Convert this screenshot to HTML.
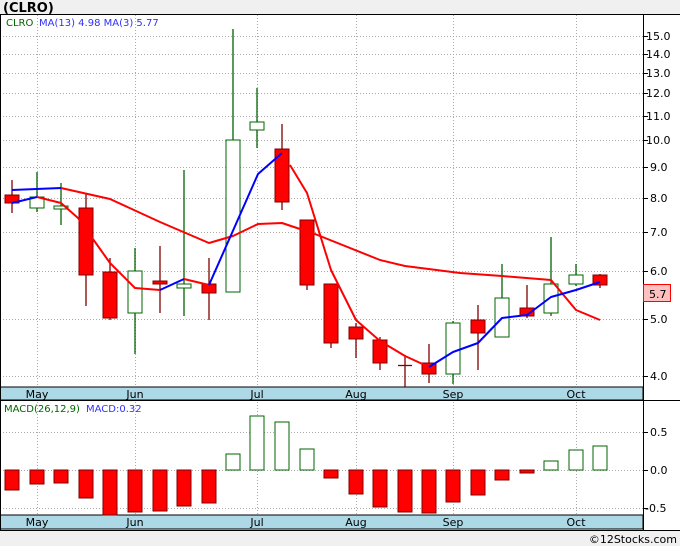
<!DOCTYPE html>
<html><head><meta charset="utf-8"><style>
body{margin:0;background:#fff;}
svg{display:block;font-family:"DejaVu Sans","Liberation Sans",sans-serif;}
</style></head><body>
<svg width="680" height="546" viewBox="0 0 680 546" xmlns="http://www.w3.org/2000/svg">
<rect x="0" y="0" width="680" height="14" fill="#f0f0f0"/>
<text x="3" y="12" font-size="13" font-weight="bold" fill="#000">(CLRO)</text>
<line x1="0" y1="14.5" x2="680" y2="14.5" stroke="#000"/>
<g stroke="#aaa" stroke-dasharray="1,2" stroke-width="1">
<line x1="0" x2="643" y1="376.5" y2="376.5"/><line x1="0" x2="643" y1="319.5" y2="319.5"/><line x1="0" x2="643" y1="271.5" y2="271.5"/><line x1="0" x2="643" y1="232.5" y2="232.5"/><line x1="0" x2="643" y1="198.5" y2="198.5"/><line x1="0" x2="643" y1="167.5" y2="167.5"/><line x1="0" x2="643" y1="140.5" y2="140.5"/><line x1="0" x2="643" y1="116.5" y2="116.5"/><line x1="0" x2="643" y1="93.5" y2="93.5"/><line x1="0" x2="643" y1="73.5" y2="73.5"/><line x1="0" x2="643" y1="54.5" y2="54.5"/><line x1="0" x2="643" y1="36.5" y2="36.5"/>
<line x1="0" x2="643" y1="432.5" y2="432.5"/><line x1="0" x2="643" y1="470.5" y2="470.5"/><line x1="0" x2="643" y1="508.5" y2="508.5"/>
<line x1="37.5" x2="37.5" y1="15" y2="530"/><line x1="135.5" x2="135.5" y1="15" y2="530"/><line x1="257.5" x2="257.5" y1="15" y2="530"/><line x1="356.5" x2="356.5" y1="15" y2="530"/><line x1="453.5" x2="453.5" y1="15" y2="530"/><line x1="576.5" x2="576.5" y1="15" y2="530"/>
</g>
<text x="6" y="26" font-size="10" fill="#006400">CLRO</text>
<text x="39" y="26" font-size="10" fill="#3030ff">MA(13)  4.98  MA(3)  5.77</text>
<g stroke-width="1.3">
<g stroke="#800000">
<line x1="12" x2="12" y1="180" y2="213"/><line x1="86" x2="86" y1="193" y2="306"/><line x1="110" x2="110" y1="258" y2="320"/><line x1="160" x2="160" y1="246" y2="313"/><line x1="209" x2="209" y1="258" y2="320"/><line x1="282" x2="282" y1="124" y2="210"/><line x1="307" x2="307" y1="220" y2="290"/><line x1="331" x2="331" y1="284" y2="348"/><line x1="356" x2="356" y1="323" y2="358"/><line x1="380" x2="380" y1="337" y2="370"/><line x1="405" x2="405" y1="355" y2="388"/><line x1="398" x2="412" y1="365.5" y2="365.5"/><line x1="429" x2="429" y1="344" y2="383"/><line x1="478" x2="478" y1="305" y2="370"/><line x1="527" x2="527" y1="285" y2="318"/><line x1="600" x2="600" y1="274" y2="288"/>
</g>
<g stroke="#006400">
<line x1="37" x2="37" y1="172" y2="212"/><line x1="61" x2="61" y1="183" y2="225"/><line x1="135" x2="135" y1="248" y2="354"/><line x1="184" x2="184" y1="170" y2="316"/><line x1="233" x2="233" y1="29" y2="292"/><line x1="257" x2="257" y1="88" y2="148"/><line x1="453" x2="453" y1="321" y2="384"/><line x1="502" x2="502" y1="264" y2="337"/><line x1="551" x2="551" y1="237" y2="316"/><line x1="576" x2="576" y1="264" y2="286"/>
</g>
</g>
<g fill="#ff0000" stroke="#800000">
<rect x="5" y="195" width="14" height="8"/><rect x="79" y="208" width="14" height="67"/><rect x="103" y="272" width="14" height="46"/><rect x="153" y="281" width="14" height="3"/><rect x="202" y="284" width="14" height="9"/><rect x="275" y="149" width="14" height="53"/><rect x="300" y="220" width="14" height="65"/><rect x="324" y="284" width="14" height="59"/><rect x="349" y="327" width="14" height="12"/><rect x="373" y="340" width="14" height="23"/><rect x="422" y="363" width="14" height="11"/><rect x="471" y="320" width="14" height="13"/><rect x="520" y="308" width="14" height="8"/><rect x="593" y="275" width="14" height="10"/>
</g>
<g fill="#fff" stroke="#006400">
<rect x="30" y="197" width="14" height="11"/><rect x="54" y="206" width="14" height="3"/><rect x="128" y="271" width="14" height="42"/><rect x="177" y="284" width="14" height="4"/><rect x="226" y="140" width="14" height="152"/><rect x="250" y="122" width="14" height="8"/><rect x="446" y="323" width="14" height="51"/><rect x="495" y="298" width="14" height="39"/><rect x="544" y="284" width="14" height="29"/><rect x="569" y="275" width="14" height="9"/>
</g>
<g fill="none" stroke-width="2" stroke-linejoin="round">
<polyline stroke="#0000ff" points="12,190 61,188"/>
<polyline stroke="#ff0000" points="61,188 110,199 160,222 209,243 233,236 258,224 282,223 315,234 380,260 405,266 460,273 502,276 551,280 576,310 600,320"/>
<polyline stroke="#0000ff" points="12,203 37,197"/>
<polyline stroke="#ff0000" points="37,197 61,203 78,218 110,263 135,288 160,290"/>
<polyline stroke="#0000ff" points="160,290 184,279"/>
<polyline stroke="#ff0000" points="184,279 209,285"/>
<polyline stroke="#0000ff" points="209,285 258,174 282,153"/>
<polyline stroke="#ff0000" points="290,165 307,193 331,270 356,320 380,341 405,356 429,367"/>
<polyline stroke="#0000ff" points="429,367 453,352 478,343 502,318 527,315 551,297 576,290 600,282"/>
</g>
<rect x="0" y="387" width="643" height="13" fill="#add8e6" stroke="#000"/>
<rect x="0" y="515" width="643" height="14" fill="#add8e6" stroke="#000"/>
<g font-size="11" fill="#000" text-anchor="middle">
<text x="37" y="398">May</text><text x="135" y="398">Jun</text><text x="257" y="398">Jul</text><text x="356" y="398">Aug</text><text x="453" y="398">Sep</text><text x="576" y="398">Oct</text>
<text x="37" y="526">May</text><text x="135" y="526">Jun</text><text x="257" y="526">Jul</text><text x="356" y="526">Aug</text><text x="453" y="526">Sep</text><text x="576" y="526">Oct</text>
</g>
<line x1="0" y1="400.5" x2="680" y2="400.5" stroke="#000"/>
<text x="4" y="412" font-size="10" fill="#006400">MACD(26,12,9)</text>
<text x="86" y="412" font-size="10" fill="#3030ff">MACD:0.32</text>
<g fill="#ff0000" stroke="#800000">
<rect x="5" y="470" width="14" height="20"/><rect x="30" y="470" width="14" height="14"/><rect x="54" y="470" width="14" height="13"/><rect x="79" y="470" width="14" height="28"/><rect x="103" y="470" width="14" height="45"/><rect x="128" y="470" width="14" height="42"/><rect x="153" y="470" width="14" height="41"/><rect x="177" y="470" width="14" height="36"/><rect x="202" y="470" width="14" height="33"/><rect x="324" y="470" width="14" height="8"/><rect x="349" y="470" width="14" height="24"/><rect x="373" y="470" width="14" height="37"/><rect x="398" y="470" width="14" height="42"/><rect x="422" y="470" width="14" height="43"/><rect x="446" y="470" width="14" height="32"/><rect x="471" y="470" width="14" height="25"/><rect x="495" y="470" width="14" height="10"/><rect x="520" y="470" width="14" height="3"/>
</g>
<g fill="#fff" stroke="#006400">
<rect x="226" y="454" width="14" height="16"/><rect x="250" y="416" width="14" height="54"/><rect x="275" y="422" width="14" height="48"/><rect x="300" y="449" width="14" height="21"/><rect x="544" y="461" width="14" height="9"/><rect x="569" y="450" width="14" height="20"/><rect x="593" y="446" width="14" height="24"/>
</g>
<line x1="643.5" y1="15" x2="643.5" y2="530" stroke="#000"/>
<line x1="0.5" y1="15" x2="0.5" y2="530" stroke="#000"/>
<g stroke="#000">
<line x1="643" x2="648" y1="376.5" y2="376.5"/><line x1="643" x2="648" y1="319.5" y2="319.5"/><line x1="643" x2="648" y1="271.5" y2="271.5"/><line x1="643" x2="648" y1="232.5" y2="232.5"/><line x1="643" x2="648" y1="198.5" y2="198.5"/><line x1="643" x2="648" y1="167.5" y2="167.5"/><line x1="643" x2="648" y1="140.5" y2="140.5"/><line x1="643" x2="648" y1="116.5" y2="116.5"/><line x1="643" x2="648" y1="93.5" y2="93.5"/><line x1="643" x2="648" y1="73.5" y2="73.5"/><line x1="643" x2="648" y1="54.5" y2="54.5"/><line x1="643" x2="648" y1="36.5" y2="36.5"/>
<line x1="643" x2="648" y1="432.5" y2="432.5"/><line x1="643" x2="648" y1="470.5" y2="470.5"/><line x1="643" x2="648" y1="508.5" y2="508.5"/>
</g>
<g font-size="11" fill="#000">
<text x="650" y="380">4.0</text><text x="650" y="323">5.0</text><text x="650" y="275">6.0</text><text x="650" y="236">7.0</text><text x="650" y="202">8.0</text><text x="650" y="171">9.0</text><text x="646" y="144">10.0</text><text x="646" y="120">11.0</text><text x="646" y="97">12.0</text><text x="646" y="77">13.0</text><text x="646" y="58">14.0</text><text x="646" y="40">15.0</text>
<text x="650" y="436">0.5</text><text x="650" y="474">0.0</text><text x="645" y="512">-0.5</text>
</g>
<rect x="643.5" y="284.5" width="27" height="17" fill="#ffc0c0" stroke="#ff0000"/>
<text x="649" y="298" font-size="11" fill="#000">5.7</text>
<line x1="0" y1="530.5" x2="680" y2="530.5" stroke="#000"/>
<rect x="0" y="531" width="680" height="15" fill="#f0f0f0"/>
<text x="677" y="543" font-size="11" fill="#000" text-anchor="end">©12Stocks.com</text>
</svg>
</body></html>
